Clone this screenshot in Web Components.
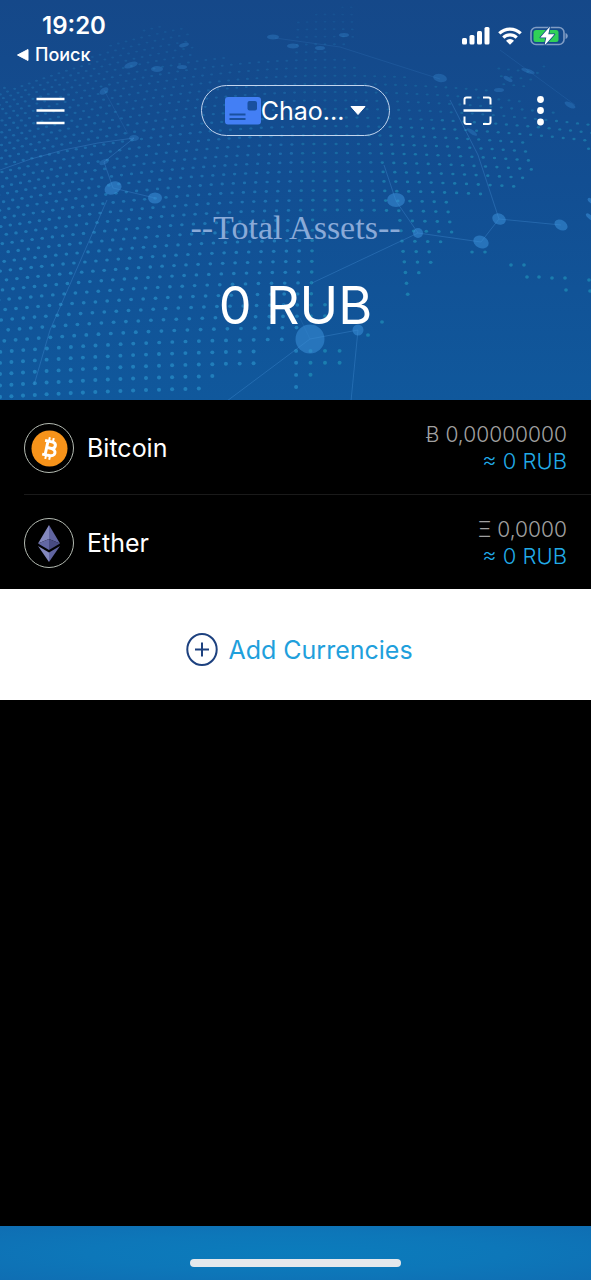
<!DOCTYPE html>
<html lang="en">
<head>
<meta charset="utf-8">
<meta name="viewport" content="width=device-width, initial-scale=1">
<title>Wallet</title>
<style>
  body { margin: 0; background: #000; color: #fff; font-family: Inter, "Liberation Sans", sans-serif; }
</style>
</head>
<body>
<wallet-app></wallet-app>
<script>
const define = (name, html, setup) => {
  const template = document.createElement('template');
  template.innerHTML = html;
  customElements.define(name, class extends HTMLElement {
    constructor() {
      super();
      this.attachShadow({ mode: 'open' }).append(template.content.cloneNode(true));
      if (setup) setup(this.shadowRoot);
    }
  });
};

/* Dotted world map with a network of nodes, drawn behind the header. */
define('world-map', `
<style>
  :host { display: block; overflow: hidden; background: linear-gradient(#154889, #124e92 45%, #10589c); }
  svg { display: block; width: 100%; height: 100%; }
</style>
<svg viewBox="0 0 591 400" preserveAspectRatio="xMidYMid slice" aria-hidden="true">
  <g id="dots"></g>
  <g stroke="#4f9be0" stroke-opacity=".3" fill="none">
    <path d="M0 170Q60 146 134 138M134 138L104 162L113 188L155 198M107 200L50 330L34 385"/>
    <path d="M384 165L396 201L418 233L481 242L499 219L561 225M499 219L478 155L450 100M418 233L312 283M310 339L358 330L351 401M310 339L227 401" />
    <path d="M310 339L300 318M500 50L575 105M275 38L340 47L440 79M104 90L128 134" stroke-opacity=".14"/>
  </g>
  <g fill="#3b8fd8" fill-opacity=".55">
    <circle cx="310" cy="339" r="14.5"/>
    <circle cx="358" cy="330" r="5.5"/>
    <circle cx="418" cy="233" r="5"/>
    <ellipse cx="396" cy="200" rx="9" ry="7"/>
    <ellipse cx="481" cy="242" rx="8" ry="6" transform="rotate(25 481 242)"/>
    <ellipse cx="499" cy="219" rx="7" ry="5.5" transform="rotate(25 499 219)"/>
    <ellipse cx="561" cy="225" rx="7" ry="5" transform="rotate(30 561 225)"/>
    <ellipse cx="590" cy="217" rx="5" ry="2" transform="rotate(40 590 217)"/>
    <ellipse cx="591" cy="201" rx="4" ry="2" transform="rotate(40 591 201)"/>
    <ellipse cx="113" cy="188" rx="9" ry="6" transform="rotate(-25 113 188)"/>
    <ellipse cx="155" cy="198" rx="7" ry="5.5"/>
  </g>
  <g fill="#3b8fd8" fill-opacity=".32">
    <ellipse cx="134" cy="138" rx="5" ry="3"/>
    <ellipse cx="104" cy="162" rx="5" ry="2.5" transform="rotate(-25 104 162)"/>
    <ellipse cx="104" cy="91" rx="5" ry="3" transform="rotate(-35 104 91)"/>
    <ellipse cx="131" cy="65" rx="7" ry="3" transform="rotate(-18 131 65)"/>
    <ellipse cx="157" cy="69" rx="6" ry="3"/>
    <ellipse cx="182" cy="67" rx="5" ry="2"/>
    <ellipse cx="184" cy="45" rx="5" ry="2" transform="rotate(-15 184 45)"/>
    <ellipse cx="273" cy="37" rx="6" ry="2.5"/>
    <ellipse cx="293" cy="46" rx="6" ry="2.5"/>
    <ellipse cx="320" cy="48" rx="5" ry="2"/>
    <ellipse cx="344" cy="35" rx="5" ry="2"/>
    <ellipse cx="440" cy="78" rx="7" ry="4" transform="rotate(12 440 78)"/>
    <ellipse cx="508" cy="79" rx="5" ry="2" transform="rotate(30 508 79)"/>
    <ellipse cx="528" cy="71" rx="7" ry="2" transform="rotate(18 528 71)"/>
    <ellipse cx="499" cy="90" rx="5" ry="2"/>
    <ellipse cx="570" cy="105" rx="6" ry="2.5" transform="rotate(28 570 105)"/>
    <ellipse cx="472" cy="132" rx="6" ry="2" transform="rotate(35 472 132)"/>
  </g>
</svg>`, root => {
  const land = [
    [[-5,90],[60,72],[100,50],[155,24],[190,30],[195,58],[250,57],[294,58],[355,60],[358,70],[405,70],[410,82],[460,86],[500,92],[560,114],[600,126],[600,152],[560,144],[532,142],[544,174],[505,190],[455,203],[457,225],[440,255],[425,270],[412,290],[408,300],[395,300],[400,250],[396,214],[318,214],[318,260],[328,315],[268,347],[255,365],[212,380],[210,405],[-5,405]],
    [[296,20],[355,3],[362,40],[310,58],[296,58]],
    [[495,66],[545,66],[530,92],[500,84]],
    [[290,342],[358,342],[340,366],[312,376],[300,395],[276,395],[290,380]]
  ];
  const inside = (x, y, p) => {
    let hit = false;
    for (let i = 0, j = p.length - 1; i < p.length; j = i++) {
      const [ax, ay] = p[i], [bx, by] = p[j];
      if ((ay > y) !== (by > y) && x < (bx - ax) * (y - ay) / (by - ay) + ax) hit = !hit;
    }
    return hit;
  };
  const dot = (x, y) => {
    const teal = x > 300 && y > 60;
    const alpha = Math.min(.58, .08 + y / 520 + (y > 120 && x > 380 ? .14 : 0));
    return `<ellipse cx="${x.toFixed(1)}" cy="${y.toFixed(1)}" rx="${(1.4 + y / 600).toFixed(2)}" ry="${(.8 + y / 320).toFixed(2)}" fill="${teal ? '#239bc0' : '#2c9bd2'}" fill-opacity="${alpha.toFixed(2)}"/>`;
  };
  let out = '';
  for (let base = 387; base > -70; base -= 7 + Math.max(0, base) * .0135) {
    const bend = .0007 * Math.exp(-Math.max(base, 0) / 190);
    const step = 8.6 + 6 * Math.min(1, Math.max(0, base) / 340);
    for (let k = -50; k < 40; k++) {
      const u = k * step;
      const x = 325 + (u < 0 ? u * (1 + u * .0003) : u);
      const y = base + bend * (x - 330) ** 2 * (x > 330 ? .6 : 1);
      if (land.some(p => inside(x, y, p))) out += dot(x, y);
    }
  }
  for (const [x, y] of [[472,252],[485,252],[511,265],[524,265],[527,277],[539,277],[552,278],[565,278],[566,290],[589,280],[590,291],[382,322],[368,335]]) out += dot(x, y);
  root.getElementById('dots').innerHTML = out;
});

define('status-bar', `
<style>
  :host { display: flex; justify-content: space-between; height: 76px; box-sizing: border-box; padding: 11px 23px 0 17px; }
  time { display: block; margin-left: 25px; font-size: 24px; line-height: 30px; font-weight: 600; }
  a { display: flex; align-items: center; gap: 6px; color: #fff; text-decoration: none; font-size: 18px; line-height: 28px; font-weight: 500; }
  .signals { display: flex; align-items: center; gap: 8px; height: 50px; }
  svg { display: block; }
</style>
<div>
  <time>19:20</time>
  <a href="#search"><svg width="12" height="12" viewBox="0 0 12 12" aria-hidden="true"><path d="M11 .5v11L.5 6z" fill="#fff" stroke="#fff" stroke-linejoin="round"/></svg>Поиск</a>
</div>
<div class="signals">
  <svg width="28" height="18" viewBox="0 0 28 18" fill="#fff" role="img" aria-label="Signal"><rect y="11" width="5" height="6.500" rx="1.500"/><rect x="7.500" y="8" width="5" height="9.500" rx="1.500"/><rect x="15" y="4" width="5" height="13.500" rx="1.500"/><rect x="22.500" y="0" width="5" height="17.500" rx="1.500"/></svg>
  <svg width="24" height="18" viewBox="0 0 24 18" role="img" aria-label="Wi-Fi"><g fill="none" stroke="#fff" stroke-width="3.200"><path d="M1.300 6.400a15.400 15.400 0 0 1 21.400 0"/><path d="M5.300 10.600a9.600 9.600 0 0 1 13.400 0"/></g><path d="M12 17.800L8 13.700a5.700 5.700 0 0 1 8 0z" fill="#fff"/></svg>
  <svg width="38" height="22" viewBox="0 0 38 22" role="img" aria-label="Battery charging"><rect x="1" y="2.500" width="33" height="17" rx="5" fill="none" stroke="#7f9cc4" stroke-width="1.600"/><path d="M35.500 8v6c3-.8 3-5.200 0-6z" fill="#7f9cc4"/><rect x="3.500" y="5" width="25" height="12" rx="2.500" fill="#30d158"/><path d="M20 1.500L10.300 12.500h6L14.500 20.500l10-11.200h-6.200z" fill="#fff" stroke="#15498b" stroke-width="1.600" stroke-linejoin="round" paint-order="stroke"/></svg>
</div>`);

define('nav-bar', `
<style>
  :host { display: grid; grid-template-columns: 1fr auto 1fr; align-items: center; height: 69px; padding: 0 34px; }
  button { display: flex; align-items: center; justify-content: center; padding: 0; border: 0; background: none; color: #fff; font: inherit; }
  svg { display: block; flex: none; }
  .menu { justify-self: start; }
  .wallet { width: 189px; height: 51px; box-sizing: border-box; border: 1px solid #c3d5ee; border-radius: 26px; font-size: 25px; line-height: 32px; }
  .wallet svg + span + svg { margin-left: 6px; }
  .actions { display: flex; justify-content: flex-end; gap: 32px; }
</style>
<button class="menu" aria-label="Menu"><svg width="32" height="32" viewBox="0 0 32 32" stroke="#fff" stroke-width="2.500"><path d="M2.500 4H30.500M2.500 15.500H30.500M2.500 28H30.500"/></svg></button>
<button class="wallet" aria-haspopup="listbox">
  <svg width="36" height="28" viewBox="0 0 36 28" aria-hidden="true"><rect width="36" height="27.500" rx="3" fill="#437ff5"/><rect x="22.500" y="4" width="9.500" height="9.500" rx="2" fill="#19509f"/><path d="M4.500 17.500H20.500M4.500 22H20.500" stroke="#19509f" stroke-width="2"/></svg>
  <span>Chao...</span>
  <svg width="16" height="9" viewBox="0 0 16 9" aria-hidden="true"><path d="M1 .5H15L8 8.500z" fill="#fff" stroke="#fff" stroke-linejoin="round"/></svg>
</button>
<div class="actions">
  <button aria-label="Scan"><svg width="30" height="30" viewBox="0 0 30 30" fill="none" stroke="#fff" stroke-width="2"><path d="M1.500 8.500V3.500Q1.500 1.500 3.500 1.500H8.500M20 1.500H25.500Q27.500 1.500 27.500 3.500V8.500M27.500 20.500V26Q27.500 28 25.500 28H20M8.500 28H3.500Q1.500 28 1.500 26V20.500"/><path d="M.5 14.500H28.500" stroke-width="2.500"/></svg></button>
  <button aria-label="More"><svg width="32" height="32" viewBox="0 0 32 32" fill="#fff"><circle cx="15.500" cy="4.500" r="3.400"/><circle cx="15.500" cy="15.500" r="3.400"/><circle cx="15.500" cy="27" r="3.400"/></svg></button>
</div>`);

define('wallet-header', `
<style>
  :host { display: block; position: relative; height: 400px; }
  world-map { position: absolute; inset: 0; }
  .content { position: relative; }
  .total { padding-top: 63px; text-align: center; }
  h1 { margin: 0; font: 34px/40px "Liberation Serif", serif; color: #8aaad8; }
  p { margin: 26px 0 0; font-size: 52px; line-height: 64px; }
</style>
<world-map></world-map>
<div class="content">
  <status-bar></status-bar>
  <nav-bar></nav-bar>
  <div class="total"><h1>--Total Assets--</h1><p>0 RUB</p></div>
</div>`);

define('coin-row', `
<style>
  :host { display: flex; align-items: center; gap: 13px; height: 94px; box-sizing: border-box; margin-left: 24px; padding: 2px 24px 0 0; }
  .badge { display: flex; align-items: center; justify-content: center; width: 50px; height: 50px; box-sizing: border-box; border: 1px solid #b4bbb2; border-radius: 50%; }
  .name { flex: 1; font-size: 25px; line-height: 32px; }
  .amounts { text-align: right; font-size: 21px; line-height: 26px; font-weight: 300; color: #a0a0a0; }
  .fiat { font-size: 22px; color: #22abe8; }
</style>
<div class="badge"><slot name="icon"></slot></div>
<div class="name"><slot name="name"></slot></div>
<div class="amounts"><div><slot name="amount"></slot></div><div class="fiat"><slot name="fiat"></slot></div></div>`);

define('add-currencies', `
<style>
  :host { display: block; background: #fff; }
  button { display: flex; align-items: center; justify-content: center; gap: 10px; width: 100%; height: 111px; padding: 10px 0 0 8px; border: 0; background: none; color: #1fa0dc; font: 25px/32px Inter, "Liberation Sans", sans-serif; }
</style>
<button><svg width="32" height="34" viewBox="0 0 32 34" fill="none" stroke="#1d417f" stroke-width="2" aria-hidden="true"><ellipse cx="16" cy="16.500" rx="14.700" ry="15.500"/><path d="M9 16.500H23M16 9.500V23.500"/></svg><span>Add Currencies</span></button>`);

define('home-bar', `
<style>
  :host { display: flex; justify-content: center; align-items: flex-end; height: 54px; box-sizing: border-box; padding-bottom: 13px; background: radial-gradient(ellipse at center, #0b7cbc, #0d77b9 50%, #0f6eb3 100%); }
  span { width: 211px; height: 8px; border-radius: 4px; background: #e5e8ec; }
</style>
<span></span>`);

define('wallet-app', `
<style>
  :host { display: flex; flex-direction: column; min-height: 100vh; }
  ul { margin: 0; padding: 0; list-style: none; }
  li + li::before { content: ""; display: block; height: 1px; margin-left: 24px; background: #1a1a1a; }
  main { flex: 1; }
  svg { display: block; }
</style>
<wallet-header></wallet-header>
<main>
  <ul>
    <li><coin-row>
      <svg slot="icon" width="37" height="37" viewBox="0 0 37 37" role="img" aria-label="Bitcoin logo"><circle cx="18.500" cy="18.500" r="18" fill="#f7931a"/><g transform="rotate(12 18.500 18.500)" fill="none" stroke="#fff" stroke-width="3"><path d="M12.500 11.500H19.500C25 11.500 25 18 19.500 18H15M19.500 18C26.500 18 26.500 25.500 19.500 25.500H12.500M15.500 11.500V25.500"/><path d="M16.500 7.500V11M20.500 7.500V11M16.500 26V29.500M20.500 26V29.500" stroke-width="2"/></g></svg>
      <span slot="name">Bitcoin</span><span slot="amount">Ƀ 0,00000000</span><span slot="fiat">≈ 0 RUB</span>
    </coin-row></li>
    <li><coin-row>
      <svg slot="icon" width="24" height="37" viewBox="0 0 24 37" role="img" aria-label="Ether logo"><path d="M12 0L1 18.500L12 14z" fill="#8387bd"/><path d="M12 0L23 18.500L12 14z" fill="#6064a0"/><path d="M1 18.500L12 14V25z" fill="#6367a3"/><path d="M23 18.500L12 14V25z" fill="#484b82"/><path d="M1 21L12 27.500V37z" fill="#8387bd"/><path d="M23 21L12 27.500V37z" fill="#6064a0"/></svg>
      <span slot="name">Ether</span><span slot="amount">Ξ 0,0000</span><span slot="fiat">≈ 0 RUB</span>
    </coin-row></li>
  </ul>
  <add-currencies></add-currencies>
</main>
<home-bar></home-bar>`);
</script>
</body>
</html>
